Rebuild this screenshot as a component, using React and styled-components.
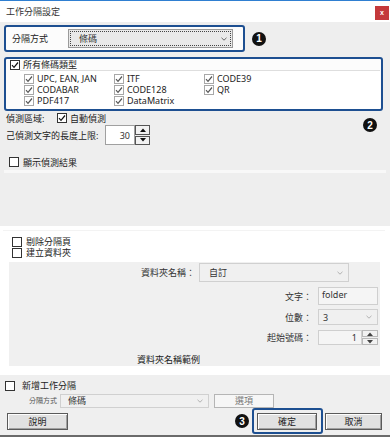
import React from "react";
import styled, { createGlobalStyle } from "styled-components";

const GlobalStyle = createGlobalStyle`
  body {
    margin: 0;
    font-family: "Noto Sans", "Noto Sans CJK TC", sans-serif;
    font-size: 9px;
    line-height: 11px;
    color: #222;
  }
`;

const NAVY = "#1d4f91";

const Window = styled.div`
  width: 390px;
  height: 438px;
  box-sizing: border-box;
  border-top: 1px solid #2f7fd1;
  background: #fff;
  display: flex;
  flex-direction: column;
  overflow: hidden;
`;

const TitleBar = styled.div`
  height: 21px;
  display: flex;
  align-items: flex-start;
  justify-content: space-between;
  padding: 0 1px 0 6px;
  line-height: 21px;
  color: #333;
`;

const Close = styled.span`
  margin-top: 5px;
  width: 14px;
  height: 14px;
  background: #c4393b;
  color: #fff;
  font-family: "Liberation Sans", Arial, sans-serif;
  font-size: 7px;
  font-weight: 700;
  line-height: 13px;
  text-align: center;
`;

const Upper = styled.div`
  position: relative;
  height: 204px;
  box-sizing: border-box;
  background: #eeeeee;
  padding: 3px 0 0 4px;
`;

const Row = styled.div`
  display: flex;
  align-items: center;
  height: ${(p) => p.$h || 11}px;
  margin-top: ${(p) => p.$mt || 0}px;
  padding-left: ${(p) => p.$pl || 0}px;
  gap: ${(p) => p.$gap || 0}px;
`;

const BlueBox = styled.div`
  box-sizing: border-box;
  border: 2px solid ${NAVY};
  border-radius: 3px;
  background: #fcfcfc;
`;

const Panel1 = styled(BlueBox)`
  width: 241px;
  height: 27px;
  display: flex;
  align-items: center;
  padding-left: 6px;
  gap: 20px;
`;

const Panel2 = styled(BlueBox)`
  margin-top: 5px;
  width: 379px;
  height: 54px;
  padding-left: 4px;
  display: flex;
  flex-direction: column;
`;

const CodeList = styled.div`
  margin-left: 10px;
  width: 360px;
  flex: 1;
  box-sizing: border-box;
  border-top: 1px solid #dedede;
  background: #fff;
  padding: 2px 0 0 4px;
  display: grid;
  grid-template-columns: 90px 90px 90px;
  grid-auto-rows: 11px;
`;

const Item = styled.label`
  display: flex;
  align-items: center;
  gap: 3px;
  white-space: nowrap;
`;

const Box = styled.span`
  flex: none;
  width: 10px;
  height: 10px;
  box-sizing: border-box;
  border: 1px solid ${(p) => (p.$light ? "#a8a8a8" : "#333")};
  background: #fff;
  display: inline-flex;
  align-items: center;
  justify-content: center;
`;

const Label = styled.span`
  flex: none;
  width: ${(p) => (p.$w ? `${p.$w}px` : "auto")};
  text-align: ${(p) => (p.$right ? "right" : "left")};
  color: ${(p) => p.$color || "#222"};
  font-size: ${(p) => p.$size || 9}px;
  white-space: nowrap;
`;

const Select = styled.div`
  flex: none;
  width: ${(p) => p.$w}px;
  height: ${(p) => p.$h}px;
  box-sizing: border-box;
  border: 1px solid ${(p) => (p.$focus ? "#9a9a9a" : "#d0d0d0")};
  background: ${(p) => (p.$focus ? "#e9e9e9" : "#f0f0f0")};
  outline: ${(p) => (p.$focus ? "1px dotted #444" : "none")};
  outline-offset: -3px;
  display: flex;
  align-items: center;
  justify-content: space-between;
  padding: 0 5px 0 ${(p) => p.$pl || 4}px;
  color: #333;
`;

const TextBox = styled.div`
  flex: none;
  width: ${(p) => p.$w}px;
  height: ${(p) => p.$h}px;
  box-sizing: border-box;
  border: 1px solid #cfcfcf;
  background: #f5f5f5;
  padding: 0 3px;
  line-height: 13px;
  color: #333;
`;

const Spin = styled.div`
  flex: none;
  display: flex;
  height: ${(p) => p.$h}px;
`;

const SpinInput = styled.div`
  width: ${(p) => p.$w}px;
  box-sizing: border-box;
  border: 1px solid ${(p) => (p.$soft ? "#cfcfcf" : "#a0a0a0")};
  background: ${(p) => (p.$soft ? "#f5f5f5" : "#fff")};
  display: flex;
  align-items: center;
  justify-content: flex-end;
  padding-right: 4px;
  color: #333;
`;

const SpinButtons = styled.div`
  width: ${(p) => p.$w}px;
  display: flex;
  flex-direction: column;
  gap: 1px;
`;

const SpinBtn = styled.span`
  flex: 1;
  box-sizing: border-box;
  border: 1px solid ${(p) => (p.$soft ? "#b8b8b8" : "#555")};
  background: #f2f2f2;
  display: flex;
  align-items: center;
  justify-content: center;
`;

const Badge = styled.span`
  flex: none;
  width: 14px;
  height: 14px;
  border-radius: 50%;
  background: #111;
  color: #fff;
  font-family: "Liberation Sans", Arial, sans-serif;
  font-size: 10px;
  font-weight: 700;
  display: inline-flex;
  align-items: center;
  justify-content: center;
`;

const FloatingBadge = styled(Badge)`
  position: absolute;
  left: 363px;
  top: 96px;
`;

const Highlight = styled.div`
  margin: ${(p) => p.$m};
  width: ${(p) => p.$w}px;
  height: ${(p) => p.$h}px;
  background: ${(p) => p.$c};
`;

const Middle = styled.div`
  height: 149px;
  box-sizing: border-box;
  background: #fff;
  padding-top: 4px;
`;

const FolderPanel = styled.div`
  margin: 4px 0 0 9px;
  width: 371px;
  height: 104px;
  box-sizing: border-box;
  background: #f0f0f0;
  padding-top: 1px;
`;

const Bottom = styled.div`
  height: 60px;
  box-sizing: border-box;
  background: #efefef;
  padding: 5px 8px 0 5px;
`;

const BottomLine = styled.div`
  height: 2px;
  background: #6a6a6a;
`;

const Button = styled.span`
  flex: none;
  width: ${(p) => p.$w}px;
  height: ${(p) => p.$h}px;
  box-sizing: border-box;
  border: 1px solid ${(p) => (p.$disabled ? "#b5b5b5" : "#5a5a5a")};
  background: ${(p) => (p.$disabled ? "#f6f6f6" : "#e1e1e1")};
  box-shadow: ${(p) => (p.$disabled ? "none" : "inset 1px 1px #fdfdfd, inset -1px -1px #a0a0a0")};
  color: ${(p) => (p.$disabled ? "#777" : "#222")};
  display: inline-flex;
  align-items: center;
  justify-content: center;
  margin-left: ${(p) => p.$ml || 0}px;
`;

const FocusRing = styled.span`
  flex: none;
  display: inline-flex;
  border: 2px solid ${NAVY};
  border-radius: 3px;
  padding: 3px 4px 2px 3px;
  margin-left: 3px;
`;

const Tick = ({ light }) => (
  <svg width="8" height="8" viewBox="0 0 8 8">
    <polyline
      points="1,4.2 3,6.3 7,1.5"
      fill="none"
      stroke={light ? "#555" : "#111"}
      strokeWidth="1.2"
    />
  </svg>
);

const Check = ({ checked, light }) => (
  <Box $light={light}>{checked && <Tick light={light} />}</Box>
);

const Chevron = ({ color = "#777" }) => (
  <svg width="6" height="4" viewBox="0 0 6 4">
    <polyline points="0.5,0.8 3,3.2 5.5,0.8" fill="none" stroke={color} strokeWidth="0.9" />
  </svg>
);

const Arrow = ({ up, color = "#111" }) => (
  <svg width="6" height="4" viewBox="0 0 6 4">
    <polygon points={up ? "0,4 3,0.5 6,4" : "0,0 3,3.5 6,0"} fill={color} />
  </svg>
);

const codes = [
  "UPC, EAN, JAN",
  "ITF",
  "CODE39",
  "CODABAR",
  "CODE128",
  "QR",
  "PDF417",
  "DataMatrix",
];

const App = () => (
  <>
    <GlobalStyle />
    <Window>
      <TitleBar>
        <span>工作分隔設定</span>
        <Close>x</Close>
      </TitleBar>

      <Upper>
        <Row $h={27} $gap={7}>
          <Panel1>
            <Label>分隔方式</Label>
            <Select $w={165} $h={19} $pl={10} $focus>
              <span>條碼</span>
              <Chevron color="#555" />
            </Select>
          </Panel1>
          <Badge>1</Badge>
        </Row>

        <Panel2>
          <Row $gap={3} $pl={0}>
            <Check checked />
            <Label>所有條碼類型</Label>
          </Row>
          <CodeList>
            {codes.map((c) => (
              <Item key={c}>
                <Check checked light />
                <span>{c}</span>
              </Item>
            ))}
          </CodeList>
        </Panel2>

        <Row $h={12} $pl={2} $mt={1}>
          <Label $w={51}>偵測區域:</Label>
          <Check checked />
          <Label style={{ marginLeft: 3 }}>自動偵測</Label>
        </Row>

        <Row $h={20} $pl={2} $mt={1}>
          <Label $w={99}>己偵測文字的長度上限:</Label>
          <Spin $h={20}>
            <SpinInput $w={30}>30</SpinInput>
            <SpinButtons $w={15}>
              <SpinBtn>
                <Arrow up />
              </SpinBtn>
              <SpinBtn>
                <Arrow />
              </SpinBtn>
            </SpinButtons>
          </Spin>
        </Row>

        <Row $h={12} $pl={5} $mt={11} $gap={4}>
          <Check />
          <Label>顯示偵測結果</Label>
        </Row>

        <Highlight $m="2px 0 0 0" $w={382} $h={3} $c="#f8f8f8" />
        <FloatingBadge>2</FloatingBadge>
      </Upper>

      <Middle>
        <Highlight $m="0 0 0 3px" $w={382} $h={1} $c="#f3f3f3" />
        <Row $pl={12} $gap={4} $mt={5}>
          <Check />
          <Label>剔除分隔頁</Label>
        </Row>
        <Row $pl={12} $gap={4}>
          <Check />
          <Label>建立資料夾</Label>
        </Row>

        <FolderPanel>
          <Row $h={19} $gap={4}>
            <Label $w={186} $right $color="#333">資料夾名稱：</Label>
            <Select $w={150} $h={19} $pl={9}>
              <span>自訂</span>
              <Chevron color="#aaa" />
            </Select>
          </Row>
          <Row $h={18} $gap={6} $mt={5}>
            <Label $w={303} $right $color="#333">文字：</Label>
            <TextBox $w={60} $h={18}>folder</TextBox>
          </Row>
          <Row $h={16} $gap={6} $mt={4}>
            <Label $w={303} $right $color="#333">位數：</Label>
            <Select $w={60} $h={16} $pl={4}>
              <span>3</span>
              <Chevron color="#aaa" />
            </Select>
          </Row>
          <Row $h={15} $gap={6} $mt={5}>
            <Label $w={303} $right $color="#333">起始號碼：</Label>
            <Spin $h={15}>
              <SpinInput $w={44} $soft>
                1
              </SpinInput>
              <SpinButtons $w={16}>
                <SpinBtn $soft>
                  <Arrow up color="#444" />
                </SpinBtn>
                <SpinBtn $soft>
                  <Arrow color="#444" />
                </SpinBtn>
              </SpinButtons>
            </Spin>
          </Row>
          <Row $mt={9} $pl={128}>
            <Label>資料夾名稱範例</Label>
          </Row>
        </FolderPanel>
      </Middle>

      <Bottom>
        <Row $gap={7}>
          <Check />
          <Label>新增工作分隔</Label>
        </Row>
        <Row $h={15} $mt={2} $pl={24}>
          <Label $w={31} $size={7} $color="#555">分隔方式</Label>
          <Select $w={149} $h={14} $pl={7}>
            <span>條碼</span>
            <Chevron color="#aaa" />
          </Select>
          <Button $w={60} $h={14} $ml={5} $disabled>
            選項
          </Button>
        </Row>
        <Row $h={26}>
          <Button $w={61} $h={17} $ml={2}>
            說明
          </Button>
          <Badge style={{ marginLeft: "auto" }}>3</Badge>
          <FocusRing>
            <Button $w={60} $h={17}>
              確定
            </Button>
          </FocusRing>
          <Button $w={57} $h={17} $ml={2}>
            取消
          </Button>
        </Row>
      </Bottom>
      <BottomLine />
    </Window>
  </>
);

export default App;
